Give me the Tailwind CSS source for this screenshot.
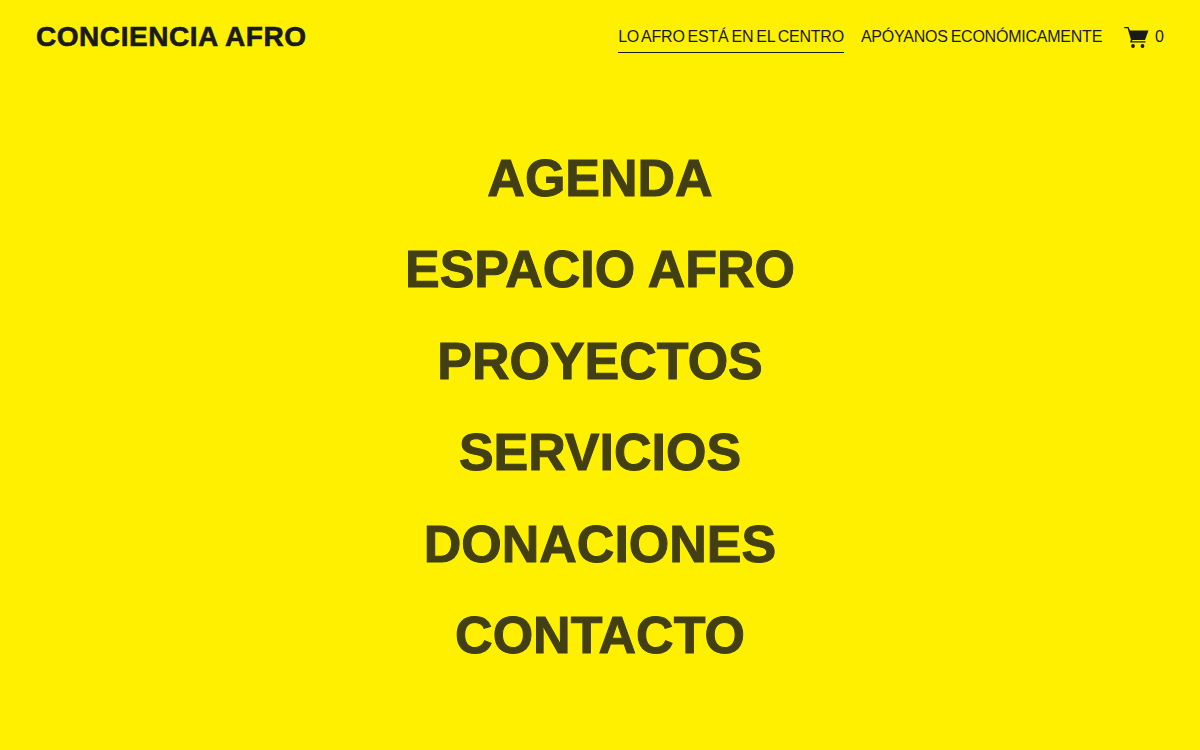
<!DOCTYPE html>
<html lang="es"><head><meta charset="utf-8"><script src="https://cdn.jsdelivr.net/npm/@tailwindcss/browser@4"></script><title>Conciencia Afro</title></head>
<body class="m-0">
<div class="h-[750px] w-[1200px] overflow-hidden bg-[#fff000] font-['Liberation_Sans',sans-serif] text-[#1a1a1a]">
<header class="flex h-[73px] items-center justify-between pl-9 pr-9">
<a class="text-[28px] leading-none font-bold tracking-[0.55px] whitespace-nowrap [-webkit-text-stroke:0.6px_#1a1a1a]">CONCIENCIA AFRO</a>
<nav class="flex items-center text-[16px] leading-none font-normal">
<a class="mr-[17px] border-b border-[#1a1a1a] pt-[9px] pb-[7px] whitespace-nowrap tracking-[-0.23px] [word-spacing:-1.24px]">LO AFRO ESTÁ EN EL CENTRO</a>
<a class="mr-[22px] pt-[9px] pb-[8px] whitespace-nowrap tracking-[-0.23px] [word-spacing:-1.24px]">APÓYANOS ECONÓMICAMENTE</a>
<svg class="mr-[6px] h-[22px] w-[25px]" viewBox="0 0 25 22" fill="#1a1a1a"><path d="M0 1h4.600l1.400 3.500h18.500l-3.500 9.500h-12.500l-.6 1.300h13.600v1.200h-15.400l.8-2.900-3.300-11.400h-3.100z"/><circle cx="9" cy="20" r="1.900"/><circle cx="18.500" cy="20" r="1.900"/></svg>
<span>0</span>
</nav>
</header>
<main class="flex flex-col items-center pt-[60px] text-[52px] leading-[91.400px] font-bold text-[#423f14] [-webkit-text-stroke:1px_#423f14]">
<a>AGENDA</a><a>ESPACIO AFRO</a><a>PROYECTOS</a><a>SERVICIOS</a><a>DONACIONES</a><a>CONTACTO</a>
</main>
</div>
</body></html>
